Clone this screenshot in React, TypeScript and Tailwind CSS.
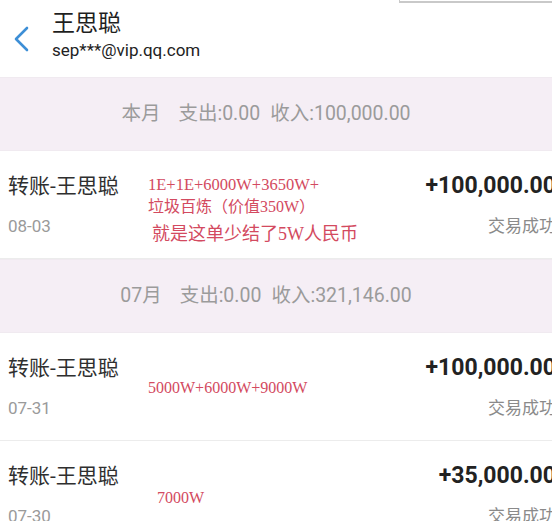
import React from 'react';

type Row = {
  date: string;
  amount: string;
  note: React.ReactNode;
};

const sans = { fontFamily: 'Roboto, "Noto Sans CJK SC", sans-serif' };

function MonthBar({ label, income }: { label: string; income: string }) {
  return (
    <div className="h-[74px] bg-[#f5eef5] border-y border-[#f0eaf0] flex items-center justify-center pr-[32px] text-[19.5px] text-[#9b9b9b]">
      <span>{label}</span>
      <span className="ml-[18px]">支出:0.00</span>
      <span className="ml-[10px]">收入:{income}</span>
    </div>
  );
}

function TxRow({ date, amount, note }: Row) {
  return (
    <div className="relative h-[108px] bg-white flex justify-between px-2 border-b border-[#ececec]">
      <div className="flex flex-col pt-[21px]">
        <span className="text-[21px] leading-[28px] text-[#2f2f2f]">转账-王思聪</span>
        <span className="mt-[14px] text-[17px] leading-[24px] text-[#9a9a9a]">{date}</span>
      </div>
      {note}
      <div className="flex flex-col items-end pt-[21px]">
        <span className="text-[23px] leading-[28px] font-bold text-[#222]">{amount}</span>
        <span className="mt-[14px] text-[17px] leading-[24px] text-[#8a8a8a]">交易成功</span>
      </div>
    </div>
  );
}

const red = 'absolute text-[#d34a60] whitespace-nowrap';
const serif = { fontFamily: '"Liberation Serif", "Noto Sans CJK SC", serif' };

export default function App() {
  return (
    <div className="w-[552px] h-[521px] overflow-hidden bg-white relative" style={sans}>
      {/* faint frame edge at top right */}
      <div className="absolute top-0 left-[399px] w-[153px] h-[3px] border-b-2 border-l border-[#c9c9c9]" />
      <div className="w-[564px]">
        <div className="h-[77px] flex items-center">
          <div className="w-[52px] flex justify-center pr-[10px]">
            <svg width="18" height="26" viewBox="0 0 18 26" fill="none">
              <path d="M15 2 L4 13 L15 24" stroke="#3d8fd6" strokeWidth="2.6" strokeLinecap="round" strokeLinejoin="round" />
            </svg>
          </div>
          <div className="flex flex-col -mt-[7px]">
            <span className="text-[23px] leading-[30px] text-[#1f1f1f]">王思聪</span>
            <span className="text-[17px] leading-[22px] text-[#222]">sep***@vip.qq.com</span>
          </div>
        </div>

        <MonthBar label="本月" income="100,000.00" />
        <TxRow
          date="08-03"
          amount="+100,000.00"
          note={
            <div className={red + ' left-[148px] top-[23px] flex flex-col'} style={serif}>
              <span className="text-[16.5px] leading-[22px]">1E+1E+6000W+3650W+</span>
              <span className="text-[16px] leading-[22px]">垃圾百炼（价值350W）</span>
              <span className="ml-[4px] mt-[4px] text-[18px] leading-[24px]">就是这单少结了5W人民币</span>
            </div>
          }
        />

        <MonthBar label="07月" income="321,146.00" />
        <TxRow
          date="07-31"
          amount="+100,000.00"
          note={
            <span className={red + ' left-[148px] top-[44px] text-[16px] leading-[22px]'} style={serif}>
              5000W+6000W+9000W
            </span>
          }
        />
        <TxRow
          date="07-30"
          amount="+35,000.00"
          note={
            <span className={red + ' left-[157px] top-[46px] text-[16px] leading-[22px]'} style={serif}>
              7000W
            </span>
          }
        />
      </div>
    </div>
  );
}
